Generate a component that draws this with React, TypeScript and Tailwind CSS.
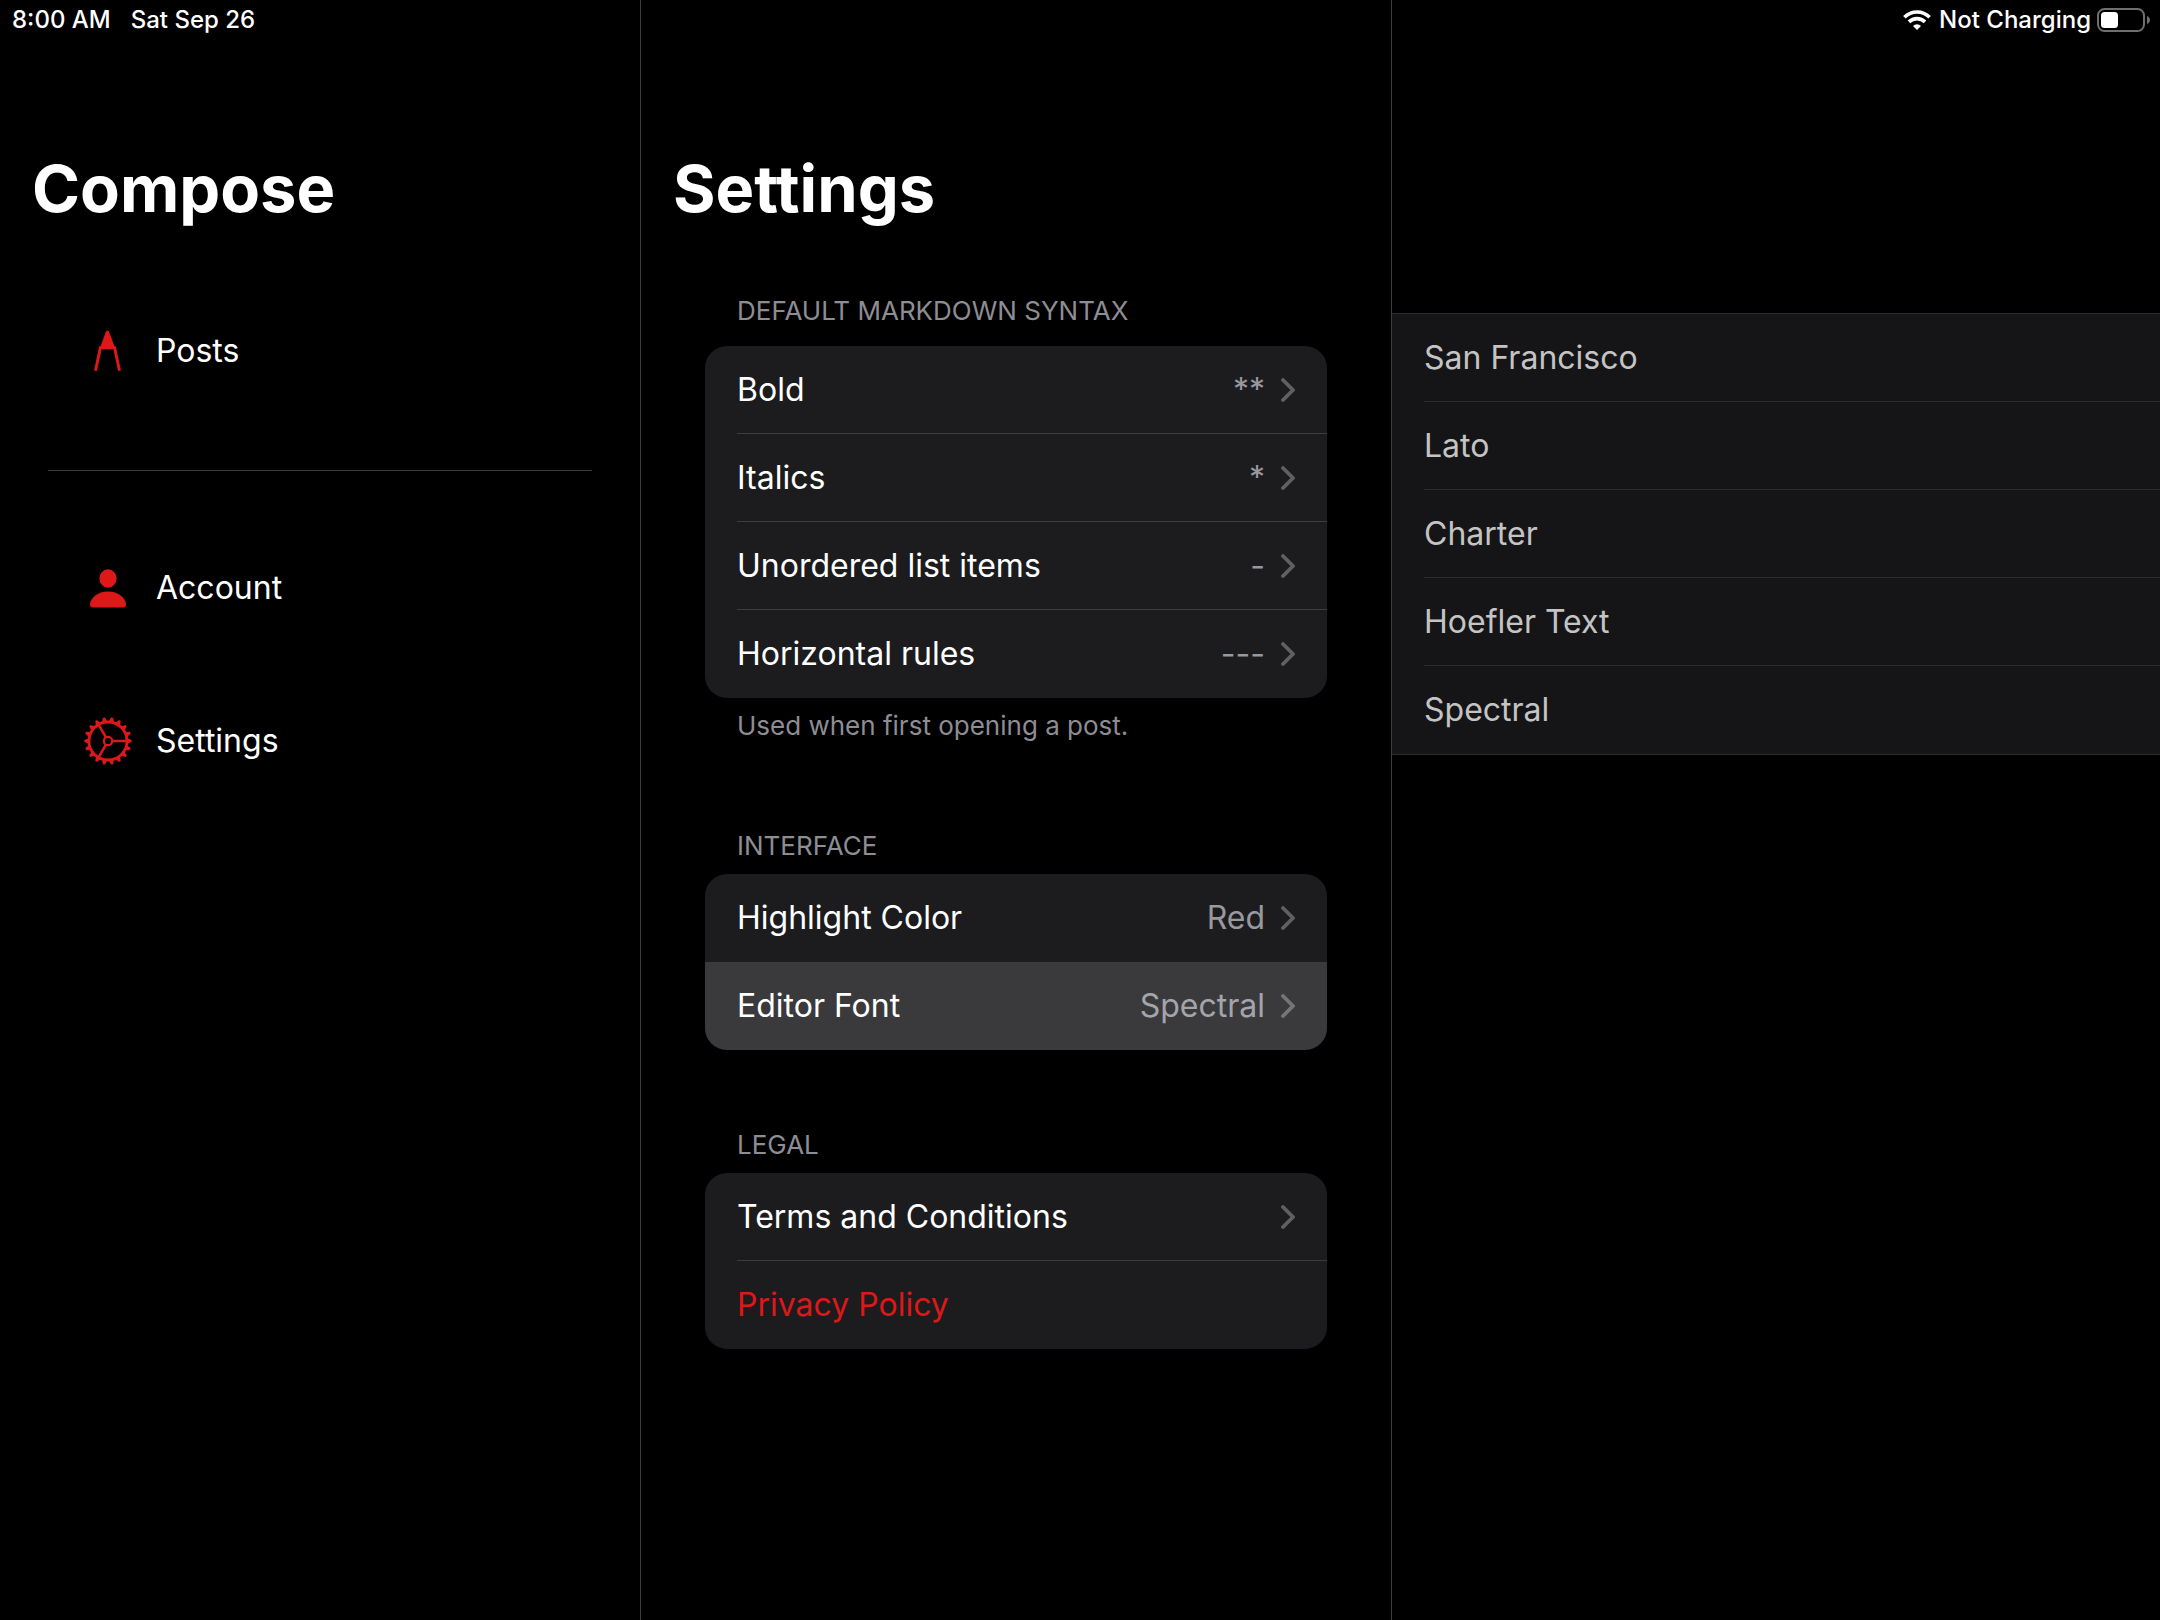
import { ReactNode } from "react";

const teeth = Array.from({ length: 18 }, (_, i) => i * 20);

function CompassIcon() {
  return (
    <svg viewBox="0 0 48 48" className="size-12 text-[#dc1818]" aria-hidden="true">
      <path d="M21.800 5q.3-1.200 1.400-1.200h.6q1.100 0 1.400 1.200L31 20.700H16z" fill="currentColor" />
      <path d="M11.500 43.800 16.400 20.800H30.600L35.500 43.800" fill="none" stroke="currentColor" strokeWidth="3" />
    </svg>
  );
}

function PersonIcon() {
  return (
    <svg viewBox="0 0 48 48" className="size-12 text-[#dc1818]" aria-hidden="true">
      <ellipse cx="24" cy="14.500" rx="8.600" ry="9.300" fill="currentColor" />
      <path d="M9 43.500c-2 0-3-1-3-3C6 35 12.500 27.500 24 27.500S42 35 42 40.500c0 2-1 3-3 3z" fill="currentColor" />
    </svg>
  );
}

function GearIcon() {
  return (
    <svg viewBox="0 0 48 48" className="size-12 text-[#dc1818]" aria-hidden="true">
      <g fill="none" stroke="currentColor">
        <circle cx="24" cy="24" r="19" strokeWidth="2.800" />
        <circle cx="24" cy="24" r="4.200" strokeWidth="2.200" />
        <path d="M28.500 24H43M21.800 20.100 14.500 7.500M21.800 27.900 14.500 40.500" strokeWidth="2.500" />
      </g>
      {teeth.map((a) => (
        <path key={a} d="M43 21.300 47.700 22.900v2.200L43 26.700z" fill="currentColor" transform={`rotate(${a} 24 24)`} />
      ))}
    </svg>
  );
}

function Chevron() {
  return (
    <svg viewBox="0 0 14 24" className="h-6 w-[14px] shrink-0 text-white/30" aria-hidden="true">
      <path d="M2 2 12 12 2 22" fill="none" stroke="currentColor" strokeWidth="3.800" strokeLinecap="round" strokeLinejoin="round" />
    </svg>
  );
}

function WifiIcon() {
  return (
    <svg viewBox="0 0 28 20" className="h-5 w-7" aria-hidden="true">
      <g fill="none" stroke="currentColor" strokeWidth="3.600">
        <path d="M1.400 7.200a17.800 17.800 0 0 1 25.200 0" />
        <path d="M6 11.900a11.400 11.400 0 0 1 16 0" />
      </g>
      <path d="M14 20l-4-4.100a5.700 5.700 0 0 1 8 0z" fill="currentColor" />
    </svg>
  );
}

function BatteryIcon() {
  return (
    <svg viewBox="0 0 54 24" className="h-6 w-[54px]" aria-hidden="true">
      <rect x="1" y="1" width="46" height="22" rx="6.500" fill="none" stroke="#6e6e6e" strokeWidth="2" />
      <rect x="4" y="4" width="17" height="16" rx="3.500" fill="white" />
      <path d="M50 8v8c1.600-.6 3-2 3-4s-1.400-3.400-3-4z" fill="#6e6e6e" />
    </svg>
  );
}

function NavItem({ icon, label }: { icon: ReactNode; label: string }) {
  return (
    <a href="#" className="flex h-[153px] items-center gap-6 pl-[84px] text-[32px] leading-10">
      {icon}
      {label}
    </a>
  );
}

function Row({ label, value, selected, last }: { label: string; value?: string; selected?: boolean; last?: boolean }) {
  return (
    <button type="button" className={selected ? "block w-full bg-[#3a3a3c] pl-8 text-left" : "block w-full pl-8 text-left"}>
      <span className={last ? "flex h-[88px] items-center gap-4 pr-8" : "flex h-[88px] items-center gap-4 border-b border-[#3d3d41] pr-8"}>
        <span className="flex-1">{label}</span>
        {value && <span className={selected ? "text-[#a4a4ab]" : "text-[#98989f]"}>{value}</span>}
        <Chevron />
      </span>
    </button>
  );
}

function SectionTitle({ children }: { children: ReactNode }) {
  return <h2 className="px-8 text-[26px] leading-8 text-[#8d8d93]">{children}</h2>;
}

function Card({ children }: { children: ReactNode }) {
  return <div className="overflow-hidden rounded-[22px] bg-[#1c1c1e] text-[32px] leading-10">{children}</div>;
}

const fonts = ["San Francisco", "Lato", "Charter", "Hoefler Text"];

export default function App() {
  return (
    <div className="grid min-h-screen grid-cols-[641fr_751fr_768fr] bg-black font-['Inter',sans-serif] text-white">
      <nav className="border-r border-[#3d3d41]">
        <div className="flex h-10 items-center gap-5 pl-3 text-2xl font-medium">
          <span>8:00 AM</span>
          <span>Sat Sep 26</span>
        </div>
        <h1 className="mt-[109px] pl-8 text-[65px] leading-20 font-bold">Compose</h1>
        <div className="mt-[45px]">
          <NavItem icon={<CompassIcon />} label="Posts" />
        </div>
        <hr className="mx-12 mt-[43px] mb-[40px] border-[#38383a]" />
        <NavItem icon={<PersonIcon />} label="Account" />
        <NavItem icon={<GearIcon />} label="Settings" />
      </nav>

      <main className="border-r border-[#3d3d41]">
        <h1 className="mt-[149px] pl-8 text-[65px] leading-20 font-bold">Settings</h1>
        <div className="px-16">
          <section className="mt-[66px]">
            <SectionTitle>DEFAULT MARKDOWN SYNTAX</SectionTitle>
            <div className="mt-[19px]">
              <Card>
                <Row label="Bold" value="**" />
                <Row label="Italics" value="*" />
                <Row label="Unordered list items" value="-" />
                <Row label="Horizontal rules" value="---" last />
              </Card>
            </div>
            <p className="mt-3 px-8 text-[26px] leading-8 text-[#8d8d93]">Used when first opening a post.</p>
          </section>

          <section className="mt-[88px]">
            <SectionTitle>INTERFACE</SectionTitle>
            <div className="mt-3">
              <Card>
                <Row label="Highlight Color" value="Red" last />
                <Row label="Editor Font" value="Spectral" selected last />
              </Card>
            </div>
          </section>

          <section className="mt-[79px]">
            <SectionTitle>LEGAL</SectionTitle>
            <div className="mt-3">
              <Card>
                <Row label="Terms and Conditions" />
                <a href="#" className="flex h-[88px] items-center px-8 text-[#dc1818]">
                  Privacy Policy
                </a>
              </Card>
            </div>
          </section>
        </div>
      </main>

      <aside>
        <div className="flex h-10 items-center justify-end pr-[9px] text-2xl font-medium">
          <WifiIcon />
          <span className="pr-[6px] pl-2">Not Charging</span>
          <BatteryIcon />
        </div>
        <div className="mt-[273px] border-y border-[#2c2c2e] bg-[#151517] pl-8 text-[32px] leading-10 text-[#c4c4c4]">
          {fonts.map((f) => (
            <button key={f} type="button" className="flex h-[88px] w-full items-center border-b border-[#2c2c2e]">
              {f}
            </button>
          ))}
          <button type="button" className="flex h-[88px] w-full items-center">
            Spectral
          </button>
        </div>
      </aside>
    </div>
  );
}
